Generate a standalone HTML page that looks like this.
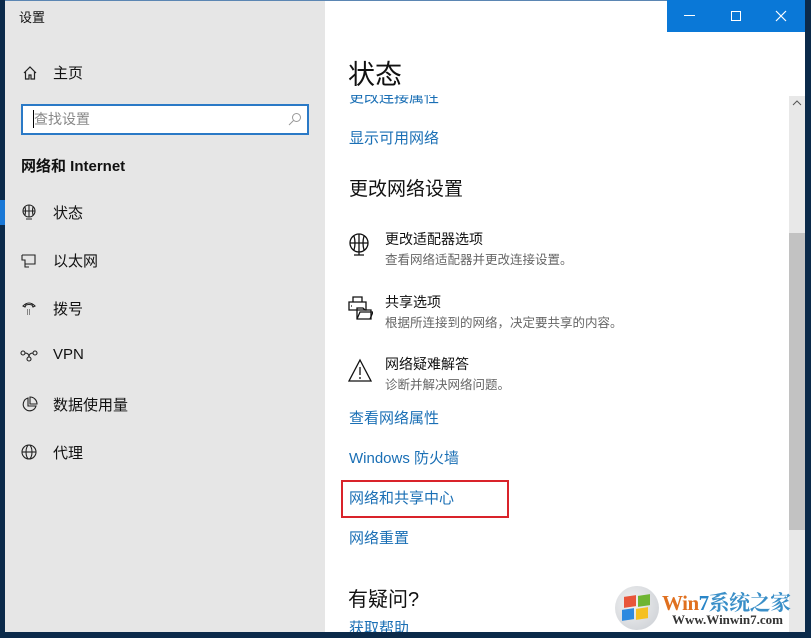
<!DOCTYPE html>
<html><head><meta charset="utf-8"><style>
*{margin:0;padding:0;box-sizing:border-box}
body{width:811px;height:635px;overflow:hidden;position:relative;background:#0b2a4a;font-family:"Liberation Sans","Noto Sans CJK SC",sans-serif}
.a{position:absolute;white-space:nowrap}
.side{position:absolute;left:5px;top:0;width:320px;height:632px;background:#e6e6e6}
.main{position:absolute;left:325px;top:0;width:480px;height:632px;background:#fff;overflow:hidden}
.nav{font-size:15px;color:#111}
.link{font-size:15px;color:#1a6fb5}
.t{font-size:14px;color:#111}
.s{font-size:12.5px;color:#666}
</style></head><body>
<div class="side"></div>
<div class="a" style="left:0;top:200px;width:5px;height:25px;background:#1a78d6"></div>
<div class="main"></div>
<div class="a" style="left:5px;top:0;width:800px;height:1px;background:#5b86b3"></div>
<div class="a" style="left:19px;top:7px;font-size:13px;color:#111">设置</div>
<!-- sidebar -->
<svg class="a" style="left:22px;top:65px" width="16" height="16" fill="none" stroke="#222" stroke-width="1.2"><path d="M2 8L8 2L14 8M3.5 7V14H7V10H9V14H12.5V7"/></svg>
<div class="a nav" style="left:53px;top:62px">主页</div>
<div class="a" style="left:21px;top:104px;width:288px;height:31px;border:2px solid #2a79c6;background:#fff"></div>
<div class="a" style="left:33px;top:110px;width:1px;height:18px;background:#000"></div>
<div class="a" style="left:34px;top:109px;font-size:14px;color:#888">查找设置</div>
<svg class="a" style="left:288px;top:112px" width="14" height="14" fill="none" stroke="#999" stroke-width="1"><circle cx="8.5" cy="5.5" r="4"/><path d="M5.5 8.5L1 13"/></svg>
<div class="a" style="left:21px;top:155px;font-size:15px;font-weight:bold;color:#111">网络和 Internet</div>
<svg class="a" style="left:21px;top:204px" width="16" height="16" fill="none" stroke="#222" stroke-width="1.1"><circle cx="8" cy="7" r="6"/><path d="M2 7H14M8 1V13M4 3Q5 7 4 11M12 3Q11 7 12 11M5 15H11"/></svg>
<div class="a nav" style="left:53px;top:202px">状态</div>
<svg class="a" style="left:21px;top:253px" width="16" height="16" fill="none" stroke="#222" stroke-width="1.1"><path d="M1 2H14V11H4M4 11V14H8M1 2V7H4V11"/></svg>
<div class="a nav" style="left:53px;top:250px">以太网</div>
<svg class="a" style="left:21px;top:300px" width="16" height="16" fill="none" stroke="#222" stroke-width="1.1"><path d="M2 6Q8 0 14 6L12 7L11 5Q8 4 5 5L4 7Z"/><path d="M6 10H10M6 12H10M6 14H10" stroke-dasharray="1 1"/></svg>
<div class="a nav" style="left:53px;top:298px">拨号</div>
<svg class="a" style="left:20px;top:349px" width="18" height="14" fill="none" stroke="#222" stroke-width="1.1"><circle cx="3" cy="4" r="2"/><circle cx="15" cy="4" r="2"/><circle cx="9" cy="10" r="2"/><path d="M5 4Q9 4 9 8M13 4Q9 4 9 8"/></svg>
<div class="a nav" style="left:53px;top:346px">VPN</div>
<svg class="a" style="left:21px;top:396px" width="17" height="17" fill="none" stroke="#222" stroke-width="1.1"><path d="M7 2A6.5 6.5 0 1 0 15 10H7Z"/><path d="M9 1V8H16A7 7 0 0 0 9 1Z"/></svg>
<div class="a nav" style="left:53px;top:394px">数据使用量</div>
<svg class="a" style="left:21px;top:444px" width="16" height="16" fill="none" stroke="#222" stroke-width="1.1"><circle cx="8" cy="8" r="7"/><ellipse cx="8" cy="8" rx="3" ry="7"/><path d="M1 8H15"/></svg>
<div class="a nav" style="left:53px;top:442px">代理</div>
<!-- main -->
<div class="a link" style="left:349px;top:86px">更改连接属性</div>
<div class="a" style="left:325px;top:1px;width:464px;height:94px;background:#fff"></div>
<div class="a" style="left:348px;top:53px;font-size:27px;color:#111">状态</div>
<div class="a link" style="left:349px;top:127px">显示可用网络</div>
<div class="a" style="left:349px;top:174px;font-size:19px;color:#111">更改网络设置</div>
<svg class="a" style="left:347px;top:232px" width="26" height="26" fill="none" stroke="#111" stroke-width="1.3"><circle cx="12" cy="11" r="9"/><path d="M3 11H21M12 2V20M7 4Q9 11 7 18M17 4Q15 11 17 18M7 23H17M12 20V23"/></svg>
<div class="a t" style="left:385px;top:229px">更改适配器选项</div>
<div class="a s" style="left:385px;top:249px">查看网络适配器并更改连接设置。</div>
<svg class="a" style="left:347px;top:295px" width="26" height="26" fill="none" stroke="#111" stroke-width="1.3"><path d="M6 2H15V7H6ZM2 7H19V15H2ZM4 11H5"/><path d="M10 13H16L18 15H24V24H10Z"/><path d="M10 24L13 17H26L23 24"/></svg>
<div class="a t" style="left:385px;top:292px">共享选项</div>
<div class="a s" style="left:385px;top:312px">根据所连接到的网络，决定要共享的内容。</div>
<svg class="a" style="left:347px;top:358px" width="26" height="26" fill="none" stroke="#111" stroke-width="1.3"><path d="M13 2L24 23H2Z"/><path d="M13 9V17M13 19V21"/></svg>
<div class="a t" style="left:385px;top:354px">网络疑难解答</div>
<div class="a s" style="left:385px;top:374px">诊断并解决网络问题。</div>
<div class="a link" style="left:349px;top:407px">查看网络属性</div>
<div class="a link" style="left:349px;top:447px">Windows 防火墙</div>
<div class="a" style="left:341px;top:480px;width:168px;height:38px;border:2px solid #d9232a"></div>
<div class="a link" style="left:349px;top:487px">网络和共享中心</div>
<div class="a link" style="left:349px;top:527px">网络重置</div>
<div class="a" style="left:348px;top:583px;font-size:20px;color:#111">有疑问?</div>
<div class="a link" style="left:349px;top:617px">获取帮助</div>
<!-- title buttons -->
<div class="a" style="left:667px;top:0;width:138px;height:32px;background:#0a78d7"></div>
<div class="a" style="left:684px;top:15px;width:11px;height:1px;background:#fff"></div>
<div class="a" style="left:731px;top:11px;width:10px;height:10px;border:1px solid #fff"></div>
<svg class="a" style="left:775px;top:10px" width="12" height="12"><path d="M1 1L11 11M11 1L1 11" stroke="#fff" stroke-width="1.2"/></svg>
<!-- scrollbar -->
<div class="a" style="left:789px;top:96px;width:16px;height:536px;background:#e8e8e8"></div>
<div class="a" style="left:789px;top:233px;width:16px;height:297px;background:#c2c2c2"></div>
<svg class="a" style="left:792px;top:100px" width="10" height="6" fill="none" stroke="#555"><path d="M1 5L5 1L9 5"/></svg>
<!-- watermark -->
<div class="a" style="left:615px;top:586px;width:44px;height:44px;border-radius:50%;background:radial-gradient(circle at 40% 40%,#f2f2f2,#c8ccd2)"></div>
<div class="a" style="left:624px;top:596px;width:12px;height:11px;background:#e8553a;transform:skewY(-8deg)"></div>
<div class="a" style="left:638px;top:595px;width:12px;height:11px;background:#6fb532;transform:skewY(-8deg)"></div>
<div class="a" style="left:622px;top:609px;width:12px;height:11px;background:#2e8ae0;transform:skewY(-8deg)"></div>
<div class="a" style="left:636px;top:608px;width:12px;height:11px;background:#f5c022;transform:skewY(-8deg)"></div>
<div class="a" style="left:662px;top:587px;font-size:21px;font-weight:bold;font-family:'Liberation Serif','Noto Serif CJK SC',serif;color:#e0701f;letter-spacing:-0.5px">Win<span style="color:#2a86c8">7</span><span style="color:#3a8fc8">系统之家</span></div>
<div class="a" style="left:672px;top:612px;font-size:13px;font-weight:bold;font-family:'Liberation Serif',serif;color:#333">Www.Winwin7.com</div>
<div class="a" style="left:0;top:632px;width:811px;height:3px;background:#0b2a4a"></div>
</body></html>
